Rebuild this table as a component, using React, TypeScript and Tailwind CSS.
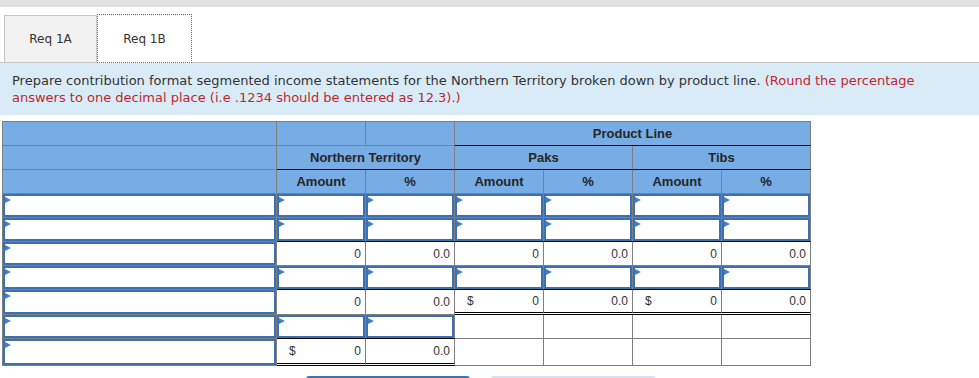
import React from "react";

function Tri() {
  return (
    <span className="absolute left-0 top-[1px] w-0 h-0 border-y-[3px] border-y-transparent border-l-[6px] border-l-[#3f7fcf]" />
  );
}

function InputCell({ bottom = "gray" }: { bottom?: "gray" | "black" }) {
  return (
    <div
      className={
        "border-r border-[#7f7f7f] " +
        (bottom === "black" ? "border-b border-b-black" : "border-b border-b-[#7f7f7f]")
      }
    >
      <div className="relative h-full border-2 border-[#3d70b3] bg-white">
        <Tri />
      </div>
    </div>
  );
}

function CalcCell({
  value,
  dollar = false,
  dbl = false,
}: {
  value: string;
  dollar?: boolean;
  dbl?: boolean;
}) {
  return (
    <div
      className={
        "flex items-center justify-between bg-white pl-[12px] pr-[4px] text-[12px] text-[#333] border-r border-[#7f7f7f] " +
        (dbl ? "border-b-[3px] border-double border-b-black" : "border-b border-b-[#7f7f7f]")
      }
    >
      <span>{dollar ? "$" : ""}</span>
      <span>{value}</span>
    </div>
  );
}

function EmptyCell({ dbl = false }: { dbl?: boolean }) {
  return (
    <div
      className={
        "bg-white border-r border-[#7f7f7f] " +
        (dbl ? "border-b-[3px] border-double border-b-black" : "border-b border-b-[#7f7f7f]")
      }
    />
  );
}

function Head({
  children,
  span = "",
  black = false,
}: {
  children?: React.ReactNode;
  span?: string;
  black?: boolean;
}) {
  return (
    <div
      className={
        "flex items-center justify-center bg-[#77ace4] font-bold text-[13px] text-[#262626] border-r border-[#7f7f7f] " +
        span +
        " " +
        (black ? "border-b border-b-black" : "border-b border-b-[#7f7f7f]")
      }
    >
      {children}
    </div>
  );
}

export default function App() {
  return (
    <div className="w-[979px] h-[378px] overflow-hidden bg-white">
      <div className="h-[7px] bg-[#e1e1e1]" />
      <div className="flex items-end h-[56px] pl-[4px] border-b border-[#c6c6c6] font-['DejaVu_Sans',sans-serif] text-[12px] text-[#333]">
        <div className="w-[93px] h-[47px] flex items-center justify-center bg-[#f2f2f2] border border-b-0 border-[#c7c7c7]">
          Req 1A
        </div>
        <div className="relative z-10 -mb-px w-[95px] h-[49px] flex items-center justify-center bg-white border border-dotted border-[#3b6fc1]">
          Req 1B
        </div>
      </div>
      <div className="bg-[#daebf8] px-[12px] py-[9px] leading-[17px] text-[13px] text-[#333] font-['DejaVu_Sans',sans-serif]">
        Prepare contribution format segmented income statements for the Northern Territory broken down by product line.{" "}
        <span className="text-[#c0272d]">
          (Round the percentage answers to one decimal place (i.e .1234 should be entered as 12.3).)
        </span>
      </div>
      <div className="ml-[2px] mt-[6px] w-fit grid grid-cols-[274px_repeat(6,89px)] grid-rows-[24px_24px_24px_24px_24px_24px_24px_25px_24px_27px] border-l border-t border-[#7f7f7f] font-['Liberation_Sans',Arial,sans-serif]">
        {/* header row 1 */}
        <Head />
        <Head />
        <Head />
        <Head span="col-span-4" black>
          Product Line
        </Head>
        {/* header row 2 */}
        <Head />
        <Head span="col-span-2" black>
          Northern Territory
        </Head>
        <Head span="col-span-2" black>
          Paks
        </Head>
        <Head span="col-span-2" black>
          Tibs
        </Head>
        {/* header row 3 */}
        <Head />
        <Head>Amount</Head>
        <Head>%</Head>
        <Head>Amount</Head>
        <Head>%</Head>
        <Head>Amount</Head>
        <Head>%</Head>

        {/* row 1 */}
        <InputCell />
        <InputCell />
        <InputCell />
        <InputCell />
        <InputCell />
        <InputCell />
        <InputCell />

        {/* row 2 */}
        <InputCell />
        <InputCell bottom="black" />
        <InputCell bottom="black" />
        <InputCell bottom="black" />
        <InputCell bottom="black" />
        <InputCell bottom="black" />
        <InputCell bottom="black" />

        {/* row 3 */}
        <InputCell />
        <CalcCell value="0" />
        <CalcCell value="0.0" />
        <CalcCell value="0" />
        <CalcCell value="0.0" />
        <CalcCell value="0" />
        <CalcCell value="0.0" />

        {/* row 4 */}
        <InputCell />
        <InputCell bottom="black" />
        <InputCell bottom="black" />
        <InputCell bottom="black" />
        <InputCell bottom="black" />
        <InputCell bottom="black" />
        <InputCell bottom="black" />

        {/* row 5 */}
        <InputCell />
        <CalcCell value="0" />
        <CalcCell value="0.0" />
        <CalcCell value="0" dollar dbl />
        <CalcCell value="0.0" dbl />
        <CalcCell value="0" dollar dbl />
        <CalcCell value="0.0" dbl />

        {/* row 6 */}
        <InputCell />
        <InputCell bottom="black" />
        <InputCell bottom="black" />
        <EmptyCell />
        <EmptyCell />
        <EmptyCell />
        <EmptyCell />

        {/* row 7 */}
        <InputCell />
        <CalcCell value="0" dollar dbl />
        <CalcCell value="0.0" dbl />
        <EmptyCell />
        <EmptyCell />
        <EmptyCell />
        <EmptyCell />
      </div>
      <div className="flex mt-[10px]">
        <div className="ml-[306px] w-[164px] h-[30px] rounded-t-[3px] bg-[#3a73b8]" />
        <div className="ml-[21px] w-[165px] h-[30px] rounded-t-[3px] bg-[#d6e4f1]" />
      </div>
    </div>
  );
}
